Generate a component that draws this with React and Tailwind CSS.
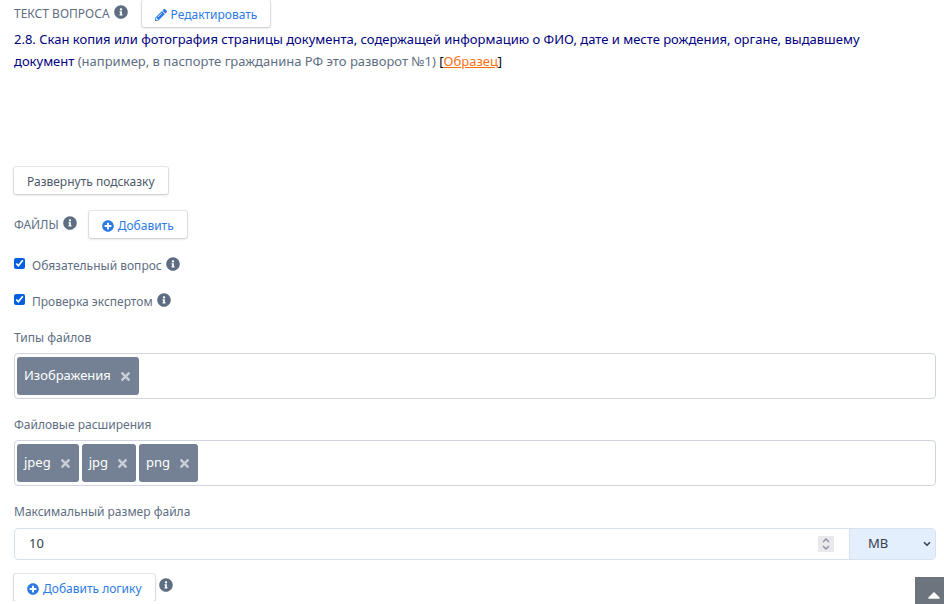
import React, { useState } from 'react';
import { FaInfoCircle, FaPencilAlt, FaPlusCircle, FaTimes, FaCaretUp } from 'react-icons/fa';

const InfoIcon = () => <FaInfoCircle className="w-3.5 h-3.5 mb-[3px] shrink-0 text-[#5e6e82]" />;

const Button = ({ children, className = '' }) => (
  <button
    type="button"
    className={`h-[27px] px-[13px] pt-0.5 flex items-center gap-1 bg-white rounded-xs text-xs shadow-[0_0_0_1px_rgba(43,45,80,0.1),0_1px_3px_rgba(0,0,0,0.16)] ${className}`}
  >
    {children}
  </button>
);

const CheckRow = ({ id, label }) => (
  <div className="h-9 flex items-center">
    <input id={id} type="checkbox" defaultChecked className="w-[11px] h-[11px] mb-1 accent-[#0060df]" />
    <label htmlFor={id} className="ml-[7px] mr-1 pt-0.5 text-xs">{label}</label>
    <InfoIcon />
  </div>
);

const TagField = ({ id, label, initial }) => {
  const [tags, setTags] = useState(initial);

  return (
    <div className="mb-[17px]">
      <label htmlFor={id} className="block h-6 text-xs leading-[18px]">{label}</label>
      <div className="h-[46px] p-[3px] pl-0.5 flex gap-[3px] border border-[#d0d5dd] rounded-sm">
        {tags.map((tag) => (
          <span key={tag} className="h-[38px] px-[7px] flex items-center gap-2 rounded-[3px] bg-[#748194] text-[13px] text-white">
            {tag}
            <button
              type="button"
              aria-label={`Удалить ${tag}`}
              className="text-[#c9cfd8]"
              onClick={() => setTags(tags.filter((item) => item !== tag))}
            >
              <FaTimes className="w-[13px] h-[13px]" />
            </button>
          </span>
        ))}
        <input id={id} className="flex-1 min-w-0 px-2 outline-none" />
      </div>
    </div>
  );
};

const App = () => {
  const [size, setSize] = useState(10);

  return (
    <div className="pl-3.5 pr-2 bg-white text-[#5e6e82] font-['Noto_Sans',sans-serif]">
      <div className="h-[27px] flex items-center">
        <span className="text-xs mr-1">ТЕКСТ ВОПРОСА</span>
        <InfoIcon />
        <Button className="ml-3.5 text-[#2c7be5]">
          <FaPencilAlt className="w-3 h-3" />
          Редактировать
        </Button>
      </div>

      <p className="mt-px h-[139px] pr-12 text-[13px] leading-[22px]">
        <span className="text-[#000080]">
          2.8. Скан копия или фотография страницы документа, содержащей информацию о ФИО, дате и месте рождения, органе, выдавшему документ
        </span>{' '}
        (например, в паспорте гражданина РФ это разворот №1){' '}
        <span className="text-black">
          [<a href="#sample" className="text-[#fd7012] underline">Образец</a>]
        </span>
      </p>

      <Button className="text-[#4d5969]">Развернуть подсказку</Button>

      <div className="mt-[17px] mb-[9px] flex items-center">
        <span className="text-xs mr-1">ФАЙЛЫ</span>
        <InfoIcon />
        <Button className="ml-3 text-[#2c7be5]">
          <FaPlusCircle className="w-3 h-3" />
          Добавить
        </Button>
      </div>

      <CheckRow id="required" label="Обязательный вопрос" />
      <CheckRow id="expert" label="Проверка экспертом" />

      <div className="mt-2.5">
        <TagField id="types" label="Типы файлов" initial={['Изображения']} />
        <TagField id="extensions" label="Файловые расширения" initial={['jpeg', 'jpg', 'png']} />
      </div>

      <label htmlFor="size" className="block h-[25px] text-xs leading-[18px]">Максимальный размер файла</label>
      <div className="h-8 flex border border-[#d8e2ef] rounded-sm text-[13px] text-[#344050]">
        <input
          id="size"
          type="number"
          value={size}
          onChange={(e) => setSize(Number(e.target.value))}
          className="flex-1 min-w-0 px-3.5 outline-none [appearance:textfield] [&::-webkit-inner-spin-button]:appearance-none"
        />
        <div className="w-4 h-4 my-auto mr-[15px] flex flex-col bg-[#e9e9ed] text-[#8f8f9d]">
          <button type="button" aria-label="Больше" className="h-2 flex items-end justify-center" onClick={() => setSize(size + 1)}>
            <svg viewBox="0 0 8 6" className="w-2 h-1.5" fill="none" stroke="currentColor" strokeWidth="1.4">
              <path d="M1 4 4 1 7 4" />
            </svg>
          </button>
          <button type="button" aria-label="Меньше" className="h-2 flex items-start justify-center" onClick={() => setSize(size - 1)}>
            <svg viewBox="0 0 8 6" className="w-2 h-1.5" fill="none" stroke="currentColor" strokeWidth="1.4">
              <path d="M1 2 4 5 7 2" />
            </svg>
          </button>
        </div>
        <div className="w-[86px] grid items-center border-l border-[#d8e2ef] bg-[#e4effd]">
          <select aria-label="Единица размера" className="col-start-1 row-start-1 h-full pl-[18px] appearance-none outline-none">
            <option>MB</option>
            <option>KB</option>
          </select>
          <svg viewBox="0 0 8 6" className="col-start-1 row-start-1 justify-self-end mr-1 w-2 h-1.5 pointer-events-none" fill="none" stroke="currentColor" strokeWidth="1.6">
            <path d="M1 1.2 4 4.2 7 1.2" />
          </svg>
        </div>
      </div>

      <div className="mt-3.5 flex">
        <Button className="text-[#2c7be5]">
          <FaPlusCircle className="w-3 h-3" />
          Добавить логику
        </Button>
        <div className="ml-1 mt-1">
          <InfoIcon />
        </div>
      </div>

      <a href="#top" aria-label="Наверх" className="fixed right-0 bottom-0 w-[29px] h-[27px] flex justify-center pt-2 pl-2 overflow-hidden bg-[#6c757d] text-white">
        <FaCaretUp className="w-5 h-5 shrink-0" />
      </a>
    </div>
  );
};

export default App;
